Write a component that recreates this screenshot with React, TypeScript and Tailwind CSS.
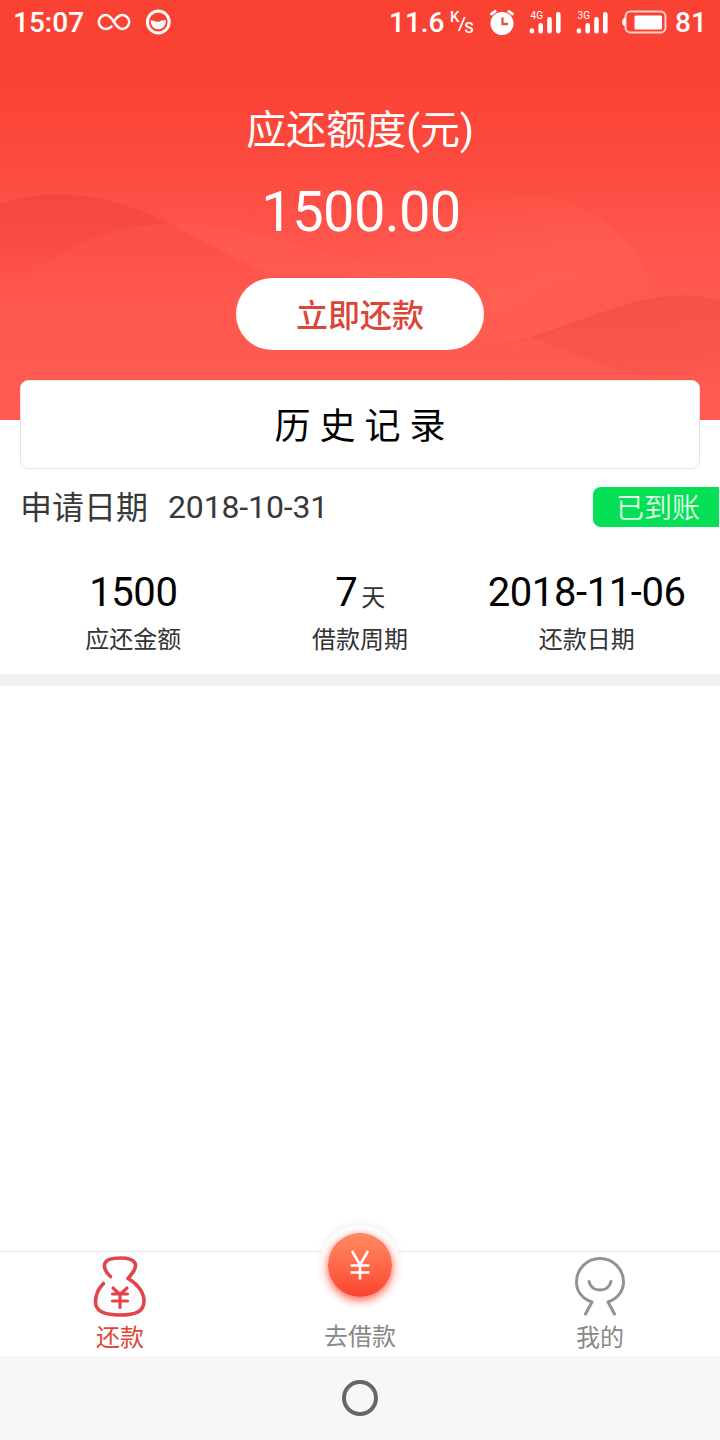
import type { ReactNode } from "react";

function Signal({ label }: { label: string }) {
  return (
    <svg width="34" height="28" viewBox="0 0 34 28" className="shrink-0">
      <text x="2.5" y="10.5" fontSize="10.5" fontWeight="400" textLength="12.5" lengthAdjust="spacingAndGlyphs" fill="#fff">
        {label}
      </text>
      <g stroke="#fff" strokeWidth="4.6" strokeLinecap="round">
        <path d="M3.900 22.600v.6M12.700 17.300v5.900M21.500 11.300v11.900M30.300 6.200v17" />
      </g>
    </svg>
  );
}

function StatusBar() {
  return (
    <div className="relative flex h-11 items-center pl-[13px] text-[28px] font-medium leading-[44px] text-white">
      <span className="w-[84px] pt-px">15:07</span>
      <svg width="34" height="20" viewBox="0 0 34 20" fill="none" stroke="#fff" strokeWidth="2.5" strokeLinecap="round">
        <path d="M14.500 14.700C12.800 16.300 11 17 8.800 17a7 7 0 0 1 0-14c3.300 0 5.500 2.700 8.200 7s4.900 7 8.200 7a7 7 0 0 0 0-14c-3.300 0-5.200 2.400-7.200 5" />
      </svg>
      <svg width="26" height="26" viewBox="0 0 26 26" className="ml-[14px]">
        <circle cx="13.300" cy="13" r="10.900" fill="none" stroke="#fff" strokeWidth="3" />
        <path d="M5.600 11.800c2.500-1.300 4.600 1 7 1s3.800-2.300 8.200-1.500c.5 5-3 9-7.400 9-4.200 0-7.600-3.500-7.800-8.500z" fill="#fff" />
      </svg>
      <div className="ml-auto flex h-11 w-[331px] items-center">
        <span className="w-[61px] pt-px">11.6</span>
        <svg width="28" height="28" viewBox="0 0 28 28" fill="#fff" className="shrink-0">
          <text x="0" y="14" fontSize="15">K</text>
          <path d="M8.700 23 14.700 9" stroke="#fff" strokeWidth="1.800" />
          <text x="14.500" y="24.500" fontSize="15">S</text>
        </svg>
        <svg width="26" height="27" viewBox="0 0 26 27" className="ml-[11px] shrink-0">
          <circle cx="13" cy="14.500" r="11.500" fill="#fff" />
          <path d="M2.500 5 6.200 2.300M23.500 5 19.800 2.300" stroke="#fff" strokeWidth="2.800" strokeLinecap="round" />
          <path d="M13.500 8.500v6.500H19" fill="none" stroke="#df554b" strokeWidth="2.300" />
        </svg>
        <span className="ml-[13px] flex"><Signal label="4G" /></span>
        <span className="ml-[13px] flex"><Signal label="3G" /></span>
        <svg width="46" height="26" viewBox="0 0 46 26" className="ml-[12px] shrink-0">
          <rect x="4.500" y="2.500" width="40" height="21" rx="5" fill="none" stroke="#ffd0cb" strokeWidth="2" />
          <path d="M4.500 8.500C2 9.500 1 11 1 13s1 3.500 3.500 4.500z" fill="#fff" />
          <rect x="13.500" y="6.500" width="27.500" height="14" rx="1.500" fill="#fff" />
        </svg>
        <span className="ml-2 pt-px">81</span>
      </div>
    </div>
  );
}

function Waves() {
  return (
    <svg className="absolute inset-0" width="720" height="420" viewBox="0 0 720 420" fill="none">
      <defs>
        <linearGradient id="leftHill" x1="0" y1="190" x2="0" y2="310" gradientUnits="userSpaceOnUse">
          <stop stopColor="#ee3935" stopOpacity=".42" />
          <stop offset=".5" stopColor="#f23d35" stopOpacity=".38" />
          <stop offset="1" stopColor="#f8453e" stopOpacity="0" />
        </linearGradient>
        <linearGradient id="innerHill" x1="0" y1="220" x2="0" y2="310" gradientUnits="userSpaceOnUse">
          <stop stopColor="#ff6b66" stopOpacity=".22" />
          <stop offset="1" stopColor="#ff6b66" stopOpacity="0" />
        </linearGradient>
        <linearGradient id="largeHill" x1="500" y1="190" x2="560" y2="350" gradientUnits="userSpaceOnUse">
          <stop stopColor="#ff6550" stopOpacity=".08" />
          <stop offset=".6" stopColor="#ff6553" stopOpacity=".45" />
          <stop offset="1" stopColor="#ff6553" stopOpacity="0" />
        </linearGradient>
        <linearGradient id="rightHill" x1="640" y1="295" x2="650" y2="395" gradientUnits="userSpaceOnUse">
          <stop stopColor="#ef493d" stopOpacity=".45" />
          <stop offset=".75" stopColor="#f75243" stopOpacity=".5" />
          <stop offset="1" stopColor="#ff5850" stopOpacity="0" />
        </linearGradient>
      </defs>
      <path d="M0 204C60 184 120 198 175 226C225 252 255 268 285 284L240 310H0Z" fill="url(#leftHill)" />
      <path d="M35 272C80 235 145 216 215 226C285 238 350 260 425 280L350 310H0Z" fill="url(#innerHill)" />
      <path d="M350 278C415 230 455 194 510 194C600 192 635 245 663 301C605 316 550 351 480 346Z" fill="url(#largeHill)" />
      <path d="M530 337C605 315 650 284 720 300V390C650 385 590 360 530 337Z" fill="url(#rightHill)" />
      <path d="M480 346C550 345 610 298 690 296" stroke="#f0493f" strokeOpacity=".1" strokeWidth="3" />
    </svg>
  );
}

function Summary({ label, children }: { label: string; children: ReactNode }) {
  return (
    <div className="flex flex-1 flex-col items-center">
      <div className="h-12 whitespace-nowrap text-[40px] leading-[48px] tracking-[-0.4px] text-black">{children}</div>
      <div className="mt-[5px] text-2xl leading-[36px] text-[#333]">{label}</div>
    </div>
  );
}

function BagIcon() {
  return (
    <svg width="54" height="62" viewBox="0 0 54 62" fill="none" stroke="#e3444a" strokeWidth="3.600" strokeLinecap="round" strokeLinejoin="round">
      <path d="M17.500 20.500C12.500 16 10.500 11 12 7C13.500 3 19 2 27.500 2S40 3.500 42 7C44 12 39.500 17 35 22.500C44 27.500 51 36 51 45C51 56 42 59 27 59S2.500 56 2.500 46C2.500 39 5.500 32.500 10.500 27.500" />
      <path d="m20 32 7 6.500 7-6.500M27 38.500V51.500M19.500 38h15M19.500 45h15" strokeWidth="3.200" />
    </svg>
  );
}

function PersonIcon() {
  return (
    <svg width="52" height="62" viewBox="0 0 52 62" fill="none" stroke="#929292" strokeWidth="3" strokeLinecap="round" strokeLinejoin="round">
      <path d="M11.500 58 18 46C8 42.500 2.500 35 2.500 26a23.500 23.500 0 0 1 47 0c0 9-6 16.500-15.500 20L40.500 58" />
      <path d="M15 25.500c1.500 5.900 5.900 8.500 11 8.500s9.500-2.600 11-8.500" />
    </svg>
  );
}

export default function App() {
  return (
    <main className="flex h-[1440px] w-[720px] flex-col overflow-hidden bg-white font-['Roboto','Noto_Sans_CJK_SC',sans-serif]">
      <header className="relative h-[420px] shrink-0 bg-[linear-gradient(180deg,#fa4233_0px,#fa4335_90px,#fc4b40_170px,#ff574f_260px,#ff5a51_350px,#ff5b52_420px)]">
        <Waves />
        <StatusBar />
        <section className="relative flex flex-col items-center text-white">
          <h1 className="mt-[57px] text-[40px] font-normal leading-[60px]">应还额度(元)</h1>
          <div className="mt-[18px] pl-[2px] text-[56px] leading-[66px] tracking-[-0.6px]">1500.00</div>
          <button className="mt-[33px] h-[72px] w-[248px] rounded-full bg-white pt-[2px] text-[32px] font-medium leading-[72px] text-[#dc4639]">
            立即还款
          </button>
        </section>
      </header>
      <section className="relative mx-5 -mt-10 flex h-[89px] shrink-0 items-center justify-center rounded-lg border border-[#e4e4e4] bg-white text-[36px] text-black">
        <h2 className="pt-[5px] font-normal">历 史 记 录</h2>
      </section>
      <section className="h-[205px] shrink-0">
        <div className="mt-[18px] flex h-10 items-center pl-5 text-[32px] leading-[40px] text-[#383838]">
          <span className="pt-px">申请日期</span>
          <span className="ml-5 tracking-[-0.15px]">2018-10-31</span>
          <span className="ml-auto mr-px h-10 w-[126px] rounded-l-lg bg-[#04df55] pl-[23px] pt-[2px] text-[28px] font-[350] leading-[40px] text-[#e2ffea]">已到账</span>
        </div>
        <div className="mt-[42px] flex px-5">
          <Summary label="应还金额">1500</Summary>
          <Summary label="借款周期">7<span className="ml-1 text-2xl text-[#333]">天</span></Summary>
          <Summary label="还款日期">2018-11-06</Summary>
        </div>
      </section>
      <div className="h-3 shrink-0 bg-[#f3f0f1]" />
      <div className="flex-1" />
      <nav className="flex h-[105px] shrink-0 border-t border-[#e6e6e6] text-2xl leading-[36px] text-[#888]">
        <div className="flex flex-1 flex-col items-center pt-1 text-[#dc4639]">
          <BagIcon />
          <span className="mt-[2px]">还款</span>
        </div>
        <div className="flex flex-1 flex-col items-center">
          <div className="relative -mt-[27px] flex size-20 shrink-0 items-center justify-center rounded-full bg-white shadow-[0_-3px_7px_#f3f3f5]">
            <div className="flex size-16 items-center justify-center rounded-full bg-linear-to-b from-[#ff8960] to-[#fb422f] shadow-[0_3px_10px_#ff5549]">
              <svg width="22" height="32" viewBox="0 0 22 32" fill="none" stroke="#fff" strokeWidth="2.600">
                <path d="m3 2 8 14 8-14M11 15.500v15M1.500 16.500h19M1.500 23.500h19" />
              </svg>
            </div>
          </div>
          <span className="mt-[14px]">去借款</span>
        </div>
        <div className="flex flex-1 flex-col items-center pt-1">
          <PersonIcon />
          <span className="mt-[2px]">我的</span>
        </div>
      </nav>
      <footer className="flex h-[84px] shrink-0 items-center justify-center bg-[#f7f7f7]">
        <div className="size-9 rounded-full border-4 border-[#666]" />
      </footer>
    </main>
  );
}
